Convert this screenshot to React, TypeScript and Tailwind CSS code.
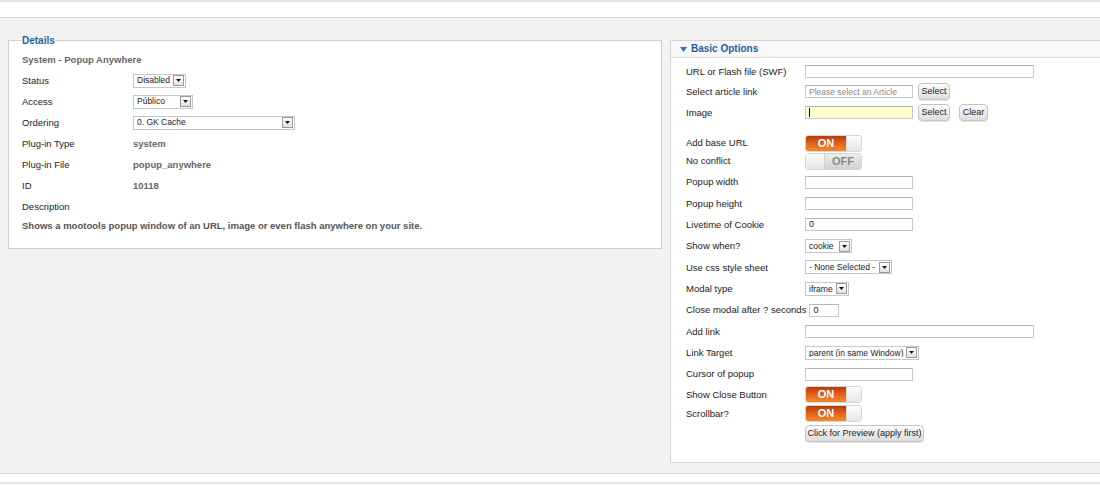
import React from 'react';

const Arrow = () => (
    <span className="mr-[1px] flex h-[11px] w-[11px] shrink-0 items-center justify-center border border-[#9a9a9a] bg-linear-to-b from-[#ffffff] to-[#e2e2e2]">
        <svg width="5" height="3" viewBox="0 0 5 3">
            <path d="M0 0h5L2.5 3z" fill="#111" />
        </svg>
    </span>
);

const Select = ({ value, className }: { value: string; className: string }) => (
    <div className={`flex h-[14px] items-center border border-[#c6c6c6] bg-white ${className}`}>
        <span className="flex-1 overflow-hidden whitespace-nowrap pl-[3px] text-[8.5px] leading-none text-[#222]">{value}</span>
        <Arrow />
    </div>
);

const TextInput = ({ className, value, placeholder, yellow }: { className: string; value?: string; placeholder?: string; yellow?: boolean }) => (
    <div
        className={`flex h-[13px] items-center border border-[#c9c9c9] border-t-[#b5b5b5] pl-[3px] text-[9px] leading-none ${yellow ? 'bg-[#ffffcc]' : 'bg-white'} ${className}`}
    >
        {yellow && <span className="h-[9px] w-px bg-black" />}
        {value && <span className="text-[#222]">{value}</span>}
        {placeholder && <span className="whitespace-nowrap text-[8.5px] text-[#8a8a8a]">{placeholder}</span>}
    </div>
);

const Button = ({ children, className = '' }: { children: React.ReactNode; className?: string }) => (
    <div
        className={`flex h-[17px] items-center justify-center whitespace-nowrap rounded-[4px] border border-[#c4c4c4] bg-linear-to-b from-[#fbfbfb] to-[#dedede] text-[9px] leading-none text-[#222] shadow-[0_1px_0_#e6e6e6] ${className}`}
    >
        {children}
    </div>
);

const Toggle = ({ on }: { on: boolean }) =>
    on ? (
        <div className="flex h-[17px] w-[57px] overflow-hidden rounded-[3px] border border-[#d6d6d6]">
            <div className="flex w-[40px] items-center justify-center bg-linear-to-b from-[#b8390a] via-[#e2631a] to-[#f48a2c] text-[11px] font-bold leading-none text-white">
                ON
            </div>
            <div className="flex-1 border-l border-[#dcdcdc] bg-linear-to-b from-[#fdfdfd] to-[#e6e6e6]" />
        </div>
    ) : (
        <div className="flex h-[17px] w-[57px] overflow-hidden rounded-[3px] border border-[#d6d6d6]">
            <div className="w-[19px] border-r border-[#d0d0d0] bg-linear-to-b from-[#fdfdfd] to-[#e6e6e6]" />
            <div className="flex flex-1 items-center justify-center bg-linear-to-b from-[#ececec] to-[#d2d2d2] text-[11px] font-bold leading-none text-[#8c8c8c]">
                OFF
            </div>
        </div>
    );

const LeftRow = ({ label, children }: { label: string; children?: React.ReactNode }) => (
    <div className="flex h-[21px] items-center">
        <div className="w-[111px] text-[#222]">{label}</div>
        {children}
    </div>
);

const Row = ({ label, children, h = 'h-[21.33px]' }: { label: string; children?: React.ReactNode; h?: string }) => (
    <div className={`flex items-center ${h}`}>
        <div className="w-[119px] shrink-0 whitespace-nowrap text-[#222]">{label}</div>
        {children}
    </div>
);

const Value = ({ children }: { children: React.ReactNode }) => <span className="font-bold text-[#666]">{children}</span>;

export default function App() {
    return (
        <div className="min-h-[486px] bg-white font-['Liberation_Sans',Arial,sans-serif] text-[9.5px] leading-none">
            <div className="h-[2px] bg-[#e4e4e4]" />
            <div className="h-[15px] bg-white" />
            <div className="flex items-start gap-[8px] border-y border-[#d6d6d6] bg-[#f2f2f2] pl-[8px] pt-[16px] pb-[10px]">
                <fieldset className="w-[654px] shrink-0 border border-[#cfcfcf] bg-white pb-[13px] pl-[13px] pt-[3px]">
                    <legend className="text-[10px] font-bold leading-[13px] text-[#1f5f9f]">Details</legend>
                    <div className="flex h-[20px] items-center">
                        <Value>System - Popup Anywhere</Value>
                    </div>
                    <LeftRow label="Status">
                        <Select value="Disabled" className="w-[53px]" />
                    </LeftRow>
                    <LeftRow label="Access">
                        <Select value="Público" className="w-[60px]" />
                    </LeftRow>
                    <LeftRow label="Ordering">
                        <Select value="0. GK Cache" className="w-[162px]" />
                    </LeftRow>
                    <LeftRow label="Plug-in Type">
                        <Value>system</Value>
                    </LeftRow>
                    <LeftRow label="Plug-in File">
                        <Value>popup_anywhere</Value>
                    </LeftRow>
                    <LeftRow label="ID">
                        <Value>10118</Value>
                    </LeftRow>
                    <LeftRow label="Description" />
                    <div className="flex h-[18px] items-center">
                        <span className="font-bold text-[#555]">
                            Shows a mootools popup window of an URL, image or even flash anywhere on your site.
                        </span>
                    </div>
                </fieldset>

                <div className="mt-[6px] flex-1 border-y border-l border-[#d4d4d4] bg-white">
                    <div className="flex h-[17px] items-center gap-[4px] border-b border-[#dcdcdc] bg-[#f8f8f8] pl-[9px]">
                        <svg width="7" height="5" viewBox="0 0 7 5">
                            <path d="M0 0h7L3.5 5z" fill="#2f6fb0" />
                        </svg>
                        <span className="text-[10px] font-bold text-[#1f5f9f]">Basic Options</span>
                    </div>
                    <div className="pb-[20px] pl-[15px] pt-[3px]">
                        <Row label="URL or Flash file (SWF)" h="h-[20.5px]">
                            <TextInput className="w-[229px]" />
                        </Row>
                        <Row label="Select article link" h="h-[20.5px]">
                            <TextInput className="w-[108px]" placeholder="Please select an Article" />
                            <Button className="ml-[5px] w-[32px]">Select</Button>
                        </Row>
                        <Row label="Image" h="h-[20.5px]">
                            <TextInput className="w-[108px]" yellow />
                            <Button className="ml-[5px] w-[32px]">Select</Button>
                            <Button className="ml-[9px] w-[29px]">Clear</Button>
                        </Row>
                        <div className="mt-[11.5px]" />
                        <Row label="Add base URL" h="h-[18px]">
                            <Toggle on />
                        </Row>
                        <Row label="No conflict" h="h-[18px]">
                            <Toggle on={false} />
                        </Row>
                        <div className="mt-[1.5px]" />
                        <Row label="Popup width">
                            <TextInput className="w-[108px]" />
                        </Row>
                        <Row label="Popup height">
                            <TextInput className="w-[108px]" />
                        </Row>
                        <Row label="Livetime of Cookie">
                            <TextInput className="w-[108px]" value="0" />
                        </Row>
                        <Row label="Show when?">
                            <Select value="cookie" className="w-[47px]" />
                        </Row>
                        <Row label="Use css style sheet">
                            <Select value="- None Selected -" className="w-[87px]" />
                        </Row>
                        <Row label="Modal type">
                            <Select value="iframe" className="w-[44px]" />
                        </Row>
                        <div className="flex h-[21.33px] items-center">
                            <span className="mr-[3px] whitespace-nowrap text-[#222]">Close modal after ? seconds</span>
                            <TextInput className="w-[30px]" value="0" />
                        </div>
                        <Row label="Add link">
                            <TextInput className="w-[229px]" />
                        </Row>
                        <Row label="Link Target">
                            <Select value="parent (in same Window)" className="w-[114px]" />
                        </Row>
                        <Row label="Cursor of popup">
                            <TextInput className="w-[108px]" />
                        </Row>
                        <Row label="Show Close Button" h="h-[19px]">
                            <Toggle on />
                        </Row>
                        <Row label="Scrollbar?" h="h-[19px]">
                            <Toggle on />
                        </Row>
                        <div className="mt-[2px] pl-[119px]">
                            <Button className="w-[119px] text-[8.5px]">Click for Preview (apply first)</Button>
                        </div>
                    </div>
                </div>
            </div>
            <div className="h-[8px] bg-white" />
            <div className="h-[2px] bg-[#e6e6e6]" />
        </div>
    );
}
